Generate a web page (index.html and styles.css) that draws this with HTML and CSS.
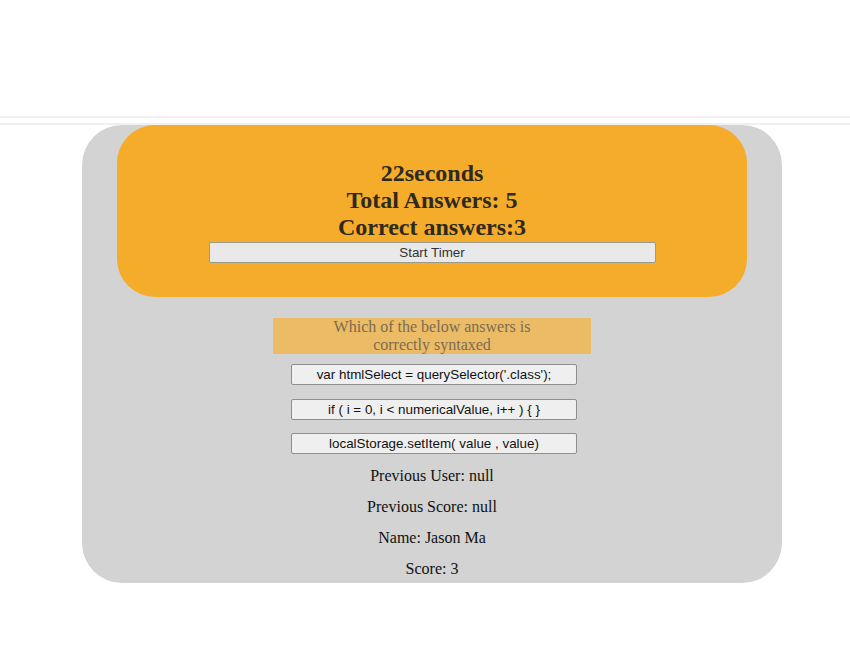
FILE: index.html
```html
<!DOCTYPE html>
<html>
<head>
<meta charset="utf-8">
<link rel="stylesheet" href="styles.css">
</head>
<body>
<div class="topbar"></div>
<main class="card">
  <section class="timer">
    <h2 class="stat">22seconds</h2>
    <h2 class="stat">Total Answers: 5</h2>
    <h2 class="stat">Correct answers:3</h2>
    <button class="start">Start Timer</button>
  </section>
  <section class="quiz">
    <div class="question">Which of the below answers is correctly syntaxed</div>
    <button class="answer">var htmlSelect = querySelector('.class');</button>
    <button class="answer">if ( i = 0, i &lt; numericalValue, i++ ) { }</button>
    <button class="answer">localStorage.setItem( value , value)</button>
    <p class="info">Previous User: null</p>
    <p class="info">Previous Score: null</p>
    <p class="info">Name: Jason Ma</p>
    <p class="info">Score: 3</p>
  </section>
</main>
</body>
</html>
```
FILE: styles.css
```css
html, body {
  margin: 0;
  padding: 0;
  background: #ffffff;
  font-family: "Liberation Serif", "Times New Roman", serif;
}
.topbar {
  margin-top: 116px;
  height: 5px;
  border-top: 2px solid #f0f0f3;
  border-bottom: 2px solid #f0f0f3;
}
.card {
  margin-left: 82px;
  width: 630px;
  padding: 0 35px 5px;
  background: #d3d3d3;
  border-radius: 40px;
}
.timer {
  background: #f5ac2b;
  border-radius: 38px;
  padding: 35px 0 34px;
  display: flex;
  flex-direction: column;
  align-items: center;
}
.stat {
  margin: 0;
  font-size: 24px;
  line-height: 27px;
  font-weight: bold;
  color: #2e2a20;
}
.start {
  width: 447px;
  height: 21px;
  margin-top: 1px;
  padding: 0;
  background: #e9e9e9;
  border: 1px solid #9a9a8e;
  border-radius: 2px;
  font-family: "Liberation Sans", Arial, sans-serif;
  font-size: 13.4px;
  color: #333;
}
.quiz {
  padding-top: 21px;
  display: flex;
  flex-direction: column;
  align-items: center;
}
.question {
  width: 318px;
  height: 36px;
  padding: 0 40px;
  box-sizing: border-box;
  background: #ecbb66;
  color: #7a6c52;
  font-size: 16px;
  line-height: 18px;
  text-align: center;
  margin-bottom: 10px;
}
.answer {
  width: 286px;
  height: 21px;
  padding: 0;
  margin-left: 4px;
  margin-bottom: 13.5px;
  background: #efefef;
  border: 1px solid #8f8f8f;
  border-radius: 2px;
  font-family: "Liberation Sans", Arial, sans-serif;
  font-size: 13.4px;
  color: #111;
}
.answer:last-of-type {
  margin-bottom: 0;
}
.info {
  margin: 13px 0 0;
  font-size: 16px;
  line-height: 18px;
  color: #111;
}
.info:last-child {
  margin-bottom: 0;
}
```
